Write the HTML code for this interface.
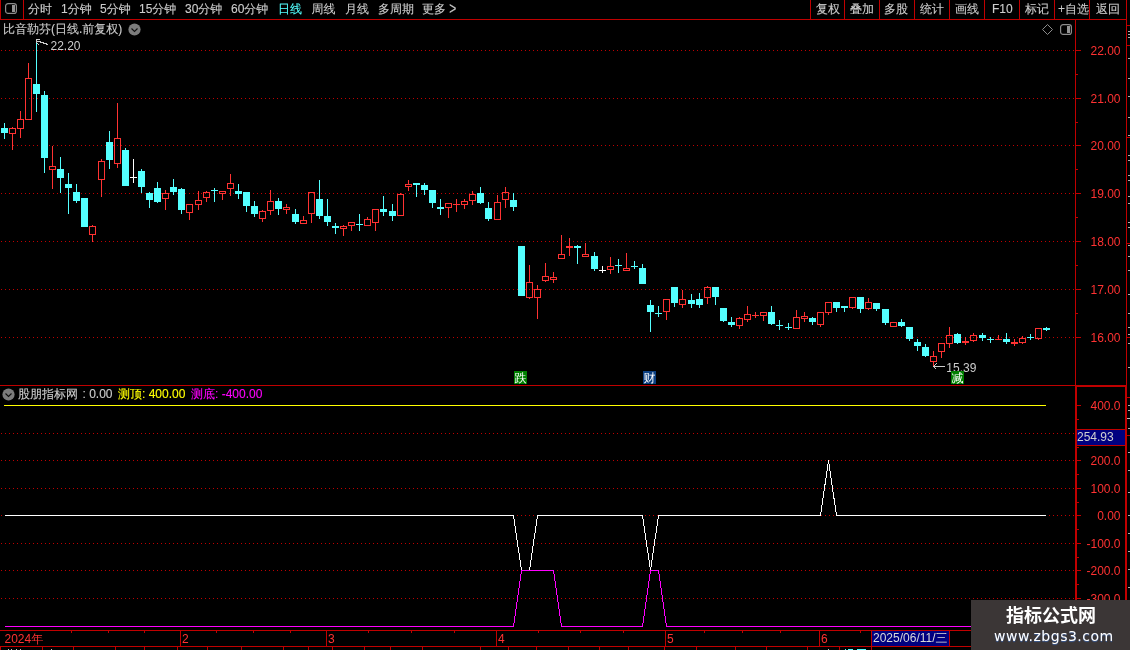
<!DOCTYPE html>
<html lang="zh-CN">
<head>
<meta charset="utf-8">
<title>比音勒芬 日线</title>
<style>
html,body{margin:0;padding:0;background:#000;}
body{width:1130px;height:650px;position:relative;overflow:hidden;font-family:"Liberation Sans","WenQuanYi Zen Hei","Noto Sans CJK SC",sans-serif;font-size:12px;}
#root{position:absolute;left:0;top:0;width:1130px;height:650px;will-change:transform;}
#chart{position:absolute;left:0;top:0;}
#chart text{font-family:"Liberation Sans","WenQuanYi Zen Hei","Noto Sans CJK SC",sans-serif;}
.t{position:absolute;white-space:pre;line-height:14px;height:14px;font-size:12px;-webkit-text-stroke:0.12px currentColor;}
.ic{position:absolute;}
.gt{display:inline-block;transform:scaleY(1.45);transform-origin:50% 62%;}
#wm{position:absolute;left:971px;top:600px;width:159px;height:50px;background:#3b3636;color:#fff;}
#wm b{position:absolute;left:35px;top:5px;white-space:nowrap;font-size:18px;line-height:22px;font-family:"Liberation Sans","Noto Sans CJK SC",sans-serif;font-weight:bold;}
#wm i{position:absolute;left:23px;top:27px;white-space:nowrap;font-style:normal;font-size:14px;letter-spacing:0.5px;line-height:18px;font-family:"DejaVu Sans","Liberation Sans",sans-serif;color:#fff;text-shadow:0 1px 1px rgba(60,120,220,.6);}
</style>
</head>
<body>
<div id="root">
<svg id="chart" width="1130" height="650" viewBox="0 0 1130 650" shape-rendering="crispEdges">
<line x1="1" y1="50.5" x2="1075" y2="50.5" stroke="#c00000" stroke-width="1" stroke-dasharray="1 3"/>
<line x1="1" y1="98.5" x2="1075" y2="98.5" stroke="#c00000" stroke-width="1" stroke-dasharray="1 3"/>
<line x1="1" y1="145.5" x2="1075" y2="145.5" stroke="#c00000" stroke-width="1" stroke-dasharray="1 3"/>
<line x1="1" y1="193.5" x2="1075" y2="193.5" stroke="#c00000" stroke-width="1" stroke-dasharray="1 3"/>
<line x1="1" y1="241.5" x2="1075" y2="241.5" stroke="#c00000" stroke-width="1" stroke-dasharray="1 3"/>
<line x1="1" y1="289.5" x2="1075" y2="289.5" stroke="#c00000" stroke-width="1" stroke-dasharray="1 3"/>
<line x1="1" y1="337.5" x2="1075" y2="337.5" stroke="#c00000" stroke-width="1" stroke-dasharray="1 3"/>
<line x1="1" y1="433.5" x2="1075" y2="433.5" stroke="#c00000" stroke-width="1" stroke-dasharray="1 3"/>
<line x1="1" y1="460.5" x2="1075" y2="460.5" stroke="#c00000" stroke-width="1" stroke-dasharray="1 3"/>
<line x1="1" y1="488.5" x2="1075" y2="488.5" stroke="#c00000" stroke-width="1" stroke-dasharray="1 3"/>
<line x1="1" y1="515.5" x2="1075" y2="515.5" stroke="#c00000" stroke-width="1" stroke-dasharray="1 3"/>
<line x1="1" y1="543.5" x2="1075" y2="543.5" stroke="#c00000" stroke-width="1" stroke-dasharray="1 3"/>
<line x1="1" y1="570.5" x2="1075" y2="570.5" stroke="#c00000" stroke-width="1" stroke-dasharray="1 3"/>
<line x1="1" y1="598.5" x2="1075" y2="598.5" stroke="#c00000" stroke-width="1" stroke-dasharray="1 3"/>
<rect x="4" y="123" width="1" height="16" fill="#54ffff"/>
<rect x="1" y="128" width="7" height="5" fill="#54ffff"/>
<rect x="12" y="127" width="1" height="1" fill="#ff3232"/>
<rect x="12" y="134" width="1" height="16" fill="#ff3232"/>
<rect x="9" y="128" width="7" height="1" fill="#ff3232"/>
<rect x="9" y="133" width="7" height="1" fill="#ff3232"/>
<rect x="9" y="128" width="1" height="6" fill="#ff3232"/>
<rect x="15" y="128" width="1" height="6" fill="#ff3232"/>
<rect x="20" y="111" width="1" height="8" fill="#ff3232"/>
<rect x="20" y="129" width="1" height="9" fill="#ff3232"/>
<rect x="17" y="119" width="7" height="1" fill="#ff3232"/>
<rect x="17" y="128" width="7" height="1" fill="#ff3232"/>
<rect x="17" y="119" width="1" height="10" fill="#ff3232"/>
<rect x="23" y="119" width="1" height="10" fill="#ff3232"/>
<rect x="28" y="63" width="1" height="15" fill="#ff3232"/>
<rect x="25" y="78" width="7" height="1" fill="#ff3232"/>
<rect x="25" y="119" width="7" height="1" fill="#ff3232"/>
<rect x="25" y="78" width="1" height="42" fill="#ff3232"/>
<rect x="31" y="78" width="1" height="42" fill="#ff3232"/>
<rect x="36" y="43" width="1" height="69" fill="#54ffff"/>
<rect x="33" y="84" width="7" height="10" fill="#54ffff"/>
<rect x="44" y="91" width="1" height="82" fill="#54ffff"/>
<rect x="41" y="95" width="7" height="63" fill="#54ffff"/>
<rect x="52" y="146" width="1" height="20" fill="#ff3232"/>
<rect x="52" y="170" width="1" height="19" fill="#ff3232"/>
<rect x="49" y="166" width="7" height="1" fill="#ff3232"/>
<rect x="49" y="169" width="7" height="1" fill="#ff3232"/>
<rect x="49" y="166" width="1" height="4" fill="#ff3232"/>
<rect x="55" y="166" width="1" height="4" fill="#ff3232"/>
<rect x="60" y="157" width="1" height="36" fill="#54ffff"/>
<rect x="57" y="169" width="7" height="9" fill="#54ffff"/>
<rect x="68" y="173" width="1" height="41" fill="#54ffff"/>
<rect x="65" y="184" width="7" height="4" fill="#54ffff"/>
<rect x="76" y="184" width="1" height="19" fill="#54ffff"/>
<rect x="73" y="192" width="7" height="9" fill="#54ffff"/>
<rect x="84" y="198" width="1" height="29" fill="#54ffff"/>
<rect x="81" y="198" width="7" height="29" fill="#54ffff"/>
<rect x="92" y="225" width="1" height="1" fill="#ff3232"/>
<rect x="92" y="235" width="1" height="7" fill="#ff3232"/>
<rect x="89" y="226" width="7" height="1" fill="#ff3232"/>
<rect x="89" y="234" width="7" height="1" fill="#ff3232"/>
<rect x="89" y="226" width="1" height="9" fill="#ff3232"/>
<rect x="95" y="226" width="1" height="9" fill="#ff3232"/>
<rect x="101" y="159" width="1" height="2" fill="#ff3232"/>
<rect x="101" y="180" width="1" height="17" fill="#ff3232"/>
<rect x="98" y="161" width="7" height="1" fill="#ff3232"/>
<rect x="98" y="179" width="7" height="1" fill="#ff3232"/>
<rect x="98" y="161" width="1" height="19" fill="#ff3232"/>
<rect x="104" y="161" width="1" height="19" fill="#ff3232"/>
<rect x="109" y="131" width="1" height="38" fill="#54ffff"/>
<rect x="106" y="142" width="7" height="18" fill="#54ffff"/>
<rect x="117" y="103" width="1" height="35" fill="#ff3232"/>
<rect x="117" y="164" width="1" height="4" fill="#ff3232"/>
<rect x="114" y="138" width="7" height="1" fill="#ff3232"/>
<rect x="114" y="163" width="7" height="1" fill="#ff3232"/>
<rect x="114" y="138" width="1" height="26" fill="#ff3232"/>
<rect x="120" y="138" width="1" height="26" fill="#ff3232"/>
<rect x="125" y="148" width="1" height="38" fill="#54ffff"/>
<rect x="122" y="150" width="7" height="36" fill="#54ffff"/>
<rect x="133" y="159" width="1" height="24" fill="#ffffff"/>
<rect x="130" y="177" width="7" height="1" fill="#ffffff"/>
<rect x="141" y="169" width="1" height="24" fill="#54ffff"/>
<rect x="138" y="171" width="7" height="16" fill="#54ffff"/>
<rect x="149" y="192" width="1" height="16" fill="#54ffff"/>
<rect x="146" y="193" width="7" height="7" fill="#54ffff"/>
<rect x="157" y="182" width="1" height="21" fill="#54ffff"/>
<rect x="154" y="188" width="7" height="14" fill="#54ffff"/>
<rect x="165" y="190" width="1" height="3" fill="#ff3232"/>
<rect x="165" y="199" width="1" height="11" fill="#ff3232"/>
<rect x="162" y="193" width="7" height="1" fill="#ff3232"/>
<rect x="162" y="198" width="7" height="1" fill="#ff3232"/>
<rect x="162" y="193" width="1" height="6" fill="#ff3232"/>
<rect x="168" y="193" width="1" height="6" fill="#ff3232"/>
<rect x="173" y="179" width="1" height="16" fill="#54ffff"/>
<rect x="170" y="187" width="7" height="5" fill="#54ffff"/>
<rect x="181" y="188" width="1" height="26" fill="#54ffff"/>
<rect x="178" y="189" width="7" height="21" fill="#54ffff"/>
<rect x="189" y="213" width="1" height="7" fill="#ff3232"/>
<rect x="186" y="204" width="7" height="1" fill="#ff3232"/>
<rect x="186" y="212" width="7" height="1" fill="#ff3232"/>
<rect x="186" y="204" width="1" height="9" fill="#ff3232"/>
<rect x="192" y="204" width="1" height="9" fill="#ff3232"/>
<rect x="198" y="191" width="1" height="9" fill="#ff3232"/>
<rect x="198" y="205" width="1" height="5" fill="#ff3232"/>
<rect x="195" y="200" width="7" height="1" fill="#ff3232"/>
<rect x="195" y="204" width="7" height="1" fill="#ff3232"/>
<rect x="195" y="200" width="1" height="5" fill="#ff3232"/>
<rect x="201" y="200" width="1" height="5" fill="#ff3232"/>
<rect x="206" y="191" width="1" height="1" fill="#ff3232"/>
<rect x="206" y="198" width="1" height="4" fill="#ff3232"/>
<rect x="203" y="192" width="7" height="1" fill="#ff3232"/>
<rect x="203" y="197" width="7" height="1" fill="#ff3232"/>
<rect x="203" y="192" width="1" height="6" fill="#ff3232"/>
<rect x="209" y="192" width="1" height="6" fill="#ff3232"/>
<rect x="214" y="188" width="1" height="14" fill="#54ffff"/>
<rect x="211" y="190" width="7" height="1" fill="#54ffff"/>
<rect x="222" y="194" width="1" height="6" fill="#ff3232"/>
<rect x="219" y="191" width="7" height="1" fill="#ff3232"/>
<rect x="219" y="193" width="7" height="1" fill="#ff3232"/>
<rect x="219" y="191" width="1" height="3" fill="#ff3232"/>
<rect x="225" y="191" width="1" height="3" fill="#ff3232"/>
<rect x="230" y="174" width="1" height="9" fill="#ff3232"/>
<rect x="230" y="189" width="1" height="7" fill="#ff3232"/>
<rect x="227" y="183" width="7" height="1" fill="#ff3232"/>
<rect x="227" y="188" width="7" height="1" fill="#ff3232"/>
<rect x="227" y="183" width="1" height="6" fill="#ff3232"/>
<rect x="233" y="183" width="1" height="6" fill="#ff3232"/>
<rect x="238" y="184" width="1" height="15" fill="#54ffff"/>
<rect x="235" y="191" width="7" height="3" fill="#54ffff"/>
<rect x="246" y="192" width="1" height="20" fill="#54ffff"/>
<rect x="243" y="192" width="7" height="14" fill="#54ffff"/>
<rect x="254" y="201" width="1" height="16" fill="#54ffff"/>
<rect x="251" y="206" width="7" height="8" fill="#54ffff"/>
<rect x="262" y="210" width="1" height="1" fill="#ff3232"/>
<rect x="262" y="219" width="1" height="3" fill="#ff3232"/>
<rect x="259" y="211" width="7" height="1" fill="#ff3232"/>
<rect x="259" y="218" width="7" height="1" fill="#ff3232"/>
<rect x="259" y="211" width="1" height="8" fill="#ff3232"/>
<rect x="265" y="211" width="1" height="8" fill="#ff3232"/>
<rect x="270" y="190" width="1" height="11" fill="#ff3232"/>
<rect x="270" y="211" width="1" height="4" fill="#ff3232"/>
<rect x="267" y="201" width="7" height="1" fill="#ff3232"/>
<rect x="267" y="210" width="7" height="1" fill="#ff3232"/>
<rect x="267" y="201" width="1" height="10" fill="#ff3232"/>
<rect x="273" y="201" width="1" height="10" fill="#ff3232"/>
<rect x="278" y="198" width="1" height="17" fill="#54ffff"/>
<rect x="275" y="201" width="7" height="8" fill="#54ffff"/>
<rect x="286" y="204" width="1" height="3" fill="#ff3232"/>
<rect x="286" y="210" width="1" height="4" fill="#ff3232"/>
<rect x="283" y="207" width="7" height="1" fill="#ff3232"/>
<rect x="283" y="209" width="7" height="1" fill="#ff3232"/>
<rect x="283" y="207" width="1" height="3" fill="#ff3232"/>
<rect x="289" y="207" width="1" height="3" fill="#ff3232"/>
<rect x="295" y="209" width="1" height="15" fill="#54ffff"/>
<rect x="292" y="214" width="7" height="8" fill="#54ffff"/>
<rect x="303" y="216" width="1" height="4" fill="#ff3232"/>
<rect x="300" y="220" width="7" height="1" fill="#ff3232"/>
<rect x="300" y="223" width="7" height="1" fill="#ff3232"/>
<rect x="300" y="220" width="1" height="4" fill="#ff3232"/>
<rect x="306" y="220" width="1" height="4" fill="#ff3232"/>
<rect x="311" y="214" width="1" height="9" fill="#ff3232"/>
<rect x="308" y="192" width="7" height="1" fill="#ff3232"/>
<rect x="308" y="213" width="7" height="1" fill="#ff3232"/>
<rect x="308" y="192" width="1" height="22" fill="#ff3232"/>
<rect x="314" y="192" width="1" height="22" fill="#ff3232"/>
<rect x="319" y="180" width="1" height="39" fill="#54ffff"/>
<rect x="316" y="199" width="7" height="17" fill="#54ffff"/>
<rect x="327" y="199" width="1" height="27" fill="#54ffff"/>
<rect x="324" y="216" width="7" height="6" fill="#54ffff"/>
<rect x="335" y="223" width="1" height="11" fill="#54ffff"/>
<rect x="332" y="226" width="7" height="2" fill="#54ffff"/>
<rect x="343" y="225" width="1" height="1" fill="#ff3232"/>
<rect x="343" y="229" width="1" height="7" fill="#ff3232"/>
<rect x="340" y="226" width="7" height="1" fill="#ff3232"/>
<rect x="340" y="228" width="7" height="1" fill="#ff3232"/>
<rect x="340" y="226" width="1" height="3" fill="#ff3232"/>
<rect x="346" y="226" width="1" height="3" fill="#ff3232"/>
<rect x="351" y="226" width="1" height="5" fill="#ff3232"/>
<rect x="348" y="222" width="7" height="1" fill="#ff3232"/>
<rect x="348" y="225" width="7" height="1" fill="#ff3232"/>
<rect x="348" y="222" width="1" height="4" fill="#ff3232"/>
<rect x="354" y="222" width="1" height="4" fill="#ff3232"/>
<rect x="359" y="214" width="1" height="17" fill="#54ffff"/>
<rect x="356" y="224" width="7" height="1" fill="#54ffff"/>
<rect x="367" y="217" width="1" height="2" fill="#ff3232"/>
<rect x="364" y="219" width="7" height="1" fill="#ff3232"/>
<rect x="364" y="225" width="7" height="1" fill="#ff3232"/>
<rect x="364" y="219" width="1" height="7" fill="#ff3232"/>
<rect x="370" y="219" width="1" height="7" fill="#ff3232"/>
<rect x="375" y="223" width="1" height="8" fill="#ff3232"/>
<rect x="372" y="209" width="7" height="1" fill="#ff3232"/>
<rect x="372" y="222" width="7" height="1" fill="#ff3232"/>
<rect x="372" y="209" width="1" height="14" fill="#ff3232"/>
<rect x="378" y="209" width="1" height="14" fill="#ff3232"/>
<rect x="383" y="196" width="1" height="20" fill="#54ffff"/>
<rect x="380" y="209" width="7" height="3" fill="#54ffff"/>
<rect x="392" y="204" width="1" height="17" fill="#54ffff"/>
<rect x="389" y="211" width="7" height="5" fill="#54ffff"/>
<rect x="400" y="193" width="1" height="1" fill="#ff3232"/>
<rect x="397" y="194" width="7" height="1" fill="#ff3232"/>
<rect x="397" y="215" width="7" height="1" fill="#ff3232"/>
<rect x="397" y="194" width="1" height="22" fill="#ff3232"/>
<rect x="403" y="194" width="1" height="22" fill="#ff3232"/>
<rect x="408" y="180" width="1" height="4" fill="#ff3232"/>
<rect x="408" y="187" width="1" height="4" fill="#ff3232"/>
<rect x="405" y="184" width="7" height="1" fill="#ff3232"/>
<rect x="405" y="186" width="7" height="1" fill="#ff3232"/>
<rect x="405" y="184" width="1" height="3" fill="#ff3232"/>
<rect x="411" y="184" width="1" height="3" fill="#ff3232"/>
<rect x="416" y="183" width="1" height="14" fill="#54ffff"/>
<rect x="413" y="183" width="7" height="2" fill="#54ffff"/>
<rect x="424" y="183" width="1" height="12" fill="#54ffff"/>
<rect x="421" y="185" width="7" height="5" fill="#54ffff"/>
<rect x="432" y="190" width="1" height="18" fill="#54ffff"/>
<rect x="429" y="190" width="7" height="13" fill="#54ffff"/>
<rect x="440" y="199" width="1" height="16" fill="#54ffff"/>
<rect x="437" y="207" width="7" height="2" fill="#54ffff"/>
<rect x="448" y="208" width="1" height="10" fill="#ff3232"/>
<rect x="445" y="203" width="7" height="1" fill="#ff3232"/>
<rect x="445" y="207" width="7" height="1" fill="#ff3232"/>
<rect x="445" y="203" width="1" height="5" fill="#ff3232"/>
<rect x="451" y="203" width="1" height="5" fill="#ff3232"/>
<rect x="456" y="199" width="1" height="13" fill="#ff3232"/>
<rect x="453" y="204" width="7" height="1" fill="#ff3232"/>
<rect x="464" y="199" width="1" height="2" fill="#ff3232"/>
<rect x="464" y="205" width="1" height="4" fill="#ff3232"/>
<rect x="461" y="201" width="7" height="1" fill="#ff3232"/>
<rect x="461" y="204" width="7" height="1" fill="#ff3232"/>
<rect x="461" y="201" width="1" height="4" fill="#ff3232"/>
<rect x="467" y="201" width="1" height="4" fill="#ff3232"/>
<rect x="472" y="191" width="1" height="3" fill="#ff3232"/>
<rect x="472" y="201" width="1" height="4" fill="#ff3232"/>
<rect x="469" y="194" width="7" height="1" fill="#ff3232"/>
<rect x="469" y="200" width="7" height="1" fill="#ff3232"/>
<rect x="469" y="194" width="1" height="7" fill="#ff3232"/>
<rect x="475" y="194" width="1" height="7" fill="#ff3232"/>
<rect x="480" y="187" width="1" height="17" fill="#54ffff"/>
<rect x="477" y="193" width="7" height="10" fill="#54ffff"/>
<rect x="488" y="202" width="1" height="19" fill="#54ffff"/>
<rect x="485" y="208" width="7" height="11" fill="#54ffff"/>
<rect x="497" y="195" width="1" height="7" fill="#ff3232"/>
<rect x="494" y="202" width="7" height="1" fill="#ff3232"/>
<rect x="494" y="219" width="7" height="1" fill="#ff3232"/>
<rect x="494" y="202" width="1" height="18" fill="#ff3232"/>
<rect x="500" y="202" width="1" height="18" fill="#ff3232"/>
<rect x="505" y="187" width="1" height="5" fill="#ff3232"/>
<rect x="505" y="200" width="1" height="8" fill="#ff3232"/>
<rect x="502" y="192" width="7" height="1" fill="#ff3232"/>
<rect x="502" y="199" width="7" height="1" fill="#ff3232"/>
<rect x="502" y="192" width="1" height="8" fill="#ff3232"/>
<rect x="508" y="192" width="1" height="8" fill="#ff3232"/>
<rect x="513" y="193" width="1" height="18" fill="#54ffff"/>
<rect x="510" y="200" width="7" height="7" fill="#54ffff"/>
<rect x="521" y="246" width="1" height="50" fill="#54ffff"/>
<rect x="518" y="246" width="7" height="50" fill="#54ffff"/>
<rect x="529" y="265" width="1" height="17" fill="#ff3232"/>
<rect x="529" y="298" width="1" height="1" fill="#ff3232"/>
<rect x="526" y="282" width="7" height="1" fill="#ff3232"/>
<rect x="526" y="297" width="7" height="1" fill="#ff3232"/>
<rect x="526" y="282" width="1" height="16" fill="#ff3232"/>
<rect x="532" y="282" width="1" height="16" fill="#ff3232"/>
<rect x="537" y="285" width="1" height="4" fill="#ff3232"/>
<rect x="537" y="298" width="1" height="21" fill="#ff3232"/>
<rect x="534" y="289" width="7" height="1" fill="#ff3232"/>
<rect x="534" y="297" width="7" height="1" fill="#ff3232"/>
<rect x="534" y="289" width="1" height="9" fill="#ff3232"/>
<rect x="540" y="289" width="1" height="9" fill="#ff3232"/>
<rect x="545" y="263" width="1" height="13" fill="#ff3232"/>
<rect x="545" y="281" width="1" height="1" fill="#ff3232"/>
<rect x="542" y="276" width="7" height="1" fill="#ff3232"/>
<rect x="542" y="280" width="7" height="1" fill="#ff3232"/>
<rect x="542" y="276" width="1" height="5" fill="#ff3232"/>
<rect x="548" y="276" width="1" height="5" fill="#ff3232"/>
<rect x="553" y="272" width="1" height="5" fill="#ff3232"/>
<rect x="553" y="280" width="1" height="3" fill="#ff3232"/>
<rect x="550" y="277" width="7" height="1" fill="#ff3232"/>
<rect x="550" y="279" width="7" height="1" fill="#ff3232"/>
<rect x="550" y="277" width="1" height="3" fill="#ff3232"/>
<rect x="556" y="277" width="1" height="3" fill="#ff3232"/>
<rect x="561" y="235" width="1" height="19" fill="#ff3232"/>
<rect x="558" y="254" width="7" height="1" fill="#ff3232"/>
<rect x="558" y="258" width="7" height="1" fill="#ff3232"/>
<rect x="558" y="254" width="1" height="5" fill="#ff3232"/>
<rect x="564" y="254" width="1" height="5" fill="#ff3232"/>
<rect x="569" y="238" width="1" height="18" fill="#ff3232"/>
<rect x="566" y="246" width="7" height="2" fill="#ff3232"/>
<rect x="577" y="245" width="1" height="19" fill="#54ffff"/>
<rect x="574" y="246" width="7" height="2" fill="#54ffff"/>
<rect x="585" y="243" width="1" height="11" fill="#ff3232"/>
<rect x="582" y="254" width="7" height="1" fill="#ff3232"/>
<rect x="582" y="256" width="7" height="1" fill="#ff3232"/>
<rect x="582" y="254" width="1" height="3" fill="#ff3232"/>
<rect x="588" y="254" width="1" height="3" fill="#ff3232"/>
<rect x="594" y="252" width="1" height="19" fill="#54ffff"/>
<rect x="591" y="256" width="7" height="13" fill="#54ffff"/>
<rect x="602" y="266" width="1" height="7" fill="#ffffff"/>
<rect x="599" y="270" width="7" height="1" fill="#ffffff"/>
<rect x="610" y="257" width="1" height="9" fill="#ff3232"/>
<rect x="610" y="270" width="1" height="4" fill="#ff3232"/>
<rect x="607" y="266" width="7" height="1" fill="#ff3232"/>
<rect x="607" y="269" width="7" height="1" fill="#ff3232"/>
<rect x="607" y="266" width="1" height="4" fill="#ff3232"/>
<rect x="613" y="266" width="1" height="4" fill="#ff3232"/>
<rect x="618" y="259" width="1" height="14" fill="#54ffff"/>
<rect x="615" y="265" width="7" height="1" fill="#54ffff"/>
<rect x="626" y="253" width="1" height="15" fill="#ff3232"/>
<rect x="623" y="268" width="7" height="1" fill="#ff3232"/>
<rect x="623" y="270" width="7" height="1" fill="#ff3232"/>
<rect x="623" y="268" width="1" height="3" fill="#ff3232"/>
<rect x="629" y="268" width="1" height="3" fill="#ff3232"/>
<rect x="634" y="261" width="1" height="8" fill="#54ffff"/>
<rect x="631" y="266" width="7" height="1" fill="#54ffff"/>
<rect x="642" y="264" width="1" height="20" fill="#54ffff"/>
<rect x="639" y="268" width="7" height="16" fill="#54ffff"/>
<rect x="650" y="300" width="1" height="32" fill="#54ffff"/>
<rect x="647" y="305" width="7" height="7" fill="#54ffff"/>
<rect x="658" y="306" width="1" height="11" fill="#54ffff"/>
<rect x="655" y="313" width="7" height="1" fill="#54ffff"/>
<rect x="666" y="312" width="1" height="8" fill="#ff3232"/>
<rect x="663" y="299" width="7" height="1" fill="#ff3232"/>
<rect x="663" y="311" width="7" height="1" fill="#ff3232"/>
<rect x="663" y="299" width="1" height="13" fill="#ff3232"/>
<rect x="669" y="299" width="1" height="13" fill="#ff3232"/>
<rect x="674" y="287" width="1" height="20" fill="#54ffff"/>
<rect x="671" y="287" width="7" height="16" fill="#54ffff"/>
<rect x="682" y="290" width="1" height="9" fill="#ff3232"/>
<rect x="682" y="305" width="1" height="3" fill="#ff3232"/>
<rect x="679" y="299" width="7" height="1" fill="#ff3232"/>
<rect x="679" y="304" width="7" height="1" fill="#ff3232"/>
<rect x="679" y="299" width="1" height="6" fill="#ff3232"/>
<rect x="685" y="299" width="1" height="6" fill="#ff3232"/>
<rect x="691" y="294" width="1" height="14" fill="#54ffff"/>
<rect x="688" y="300" width="7" height="4" fill="#54ffff"/>
<rect x="699" y="293" width="1" height="15" fill="#54ffff"/>
<rect x="696" y="299" width="7" height="6" fill="#54ffff"/>
<rect x="707" y="286" width="1" height="1" fill="#ff3232"/>
<rect x="707" y="298" width="1" height="6" fill="#ff3232"/>
<rect x="704" y="287" width="7" height="1" fill="#ff3232"/>
<rect x="704" y="297" width="7" height="1" fill="#ff3232"/>
<rect x="704" y="287" width="1" height="11" fill="#ff3232"/>
<rect x="710" y="287" width="1" height="11" fill="#ff3232"/>
<rect x="715" y="287" width="1" height="18" fill="#54ffff"/>
<rect x="712" y="287" width="7" height="10" fill="#54ffff"/>
<rect x="723" y="308" width="1" height="14" fill="#54ffff"/>
<rect x="720" y="308" width="7" height="13" fill="#54ffff"/>
<rect x="731" y="317" width="1" height="10" fill="#54ffff"/>
<rect x="728" y="322" width="7" height="3" fill="#54ffff"/>
<rect x="739" y="317" width="1" height="1" fill="#ff3232"/>
<rect x="739" y="326" width="1" height="3" fill="#ff3232"/>
<rect x="736" y="318" width="7" height="1" fill="#ff3232"/>
<rect x="736" y="325" width="7" height="1" fill="#ff3232"/>
<rect x="736" y="318" width="1" height="8" fill="#ff3232"/>
<rect x="742" y="318" width="1" height="8" fill="#ff3232"/>
<rect x="747" y="306" width="1" height="8" fill="#ff3232"/>
<rect x="747" y="320" width="1" height="2" fill="#ff3232"/>
<rect x="744" y="314" width="7" height="1" fill="#ff3232"/>
<rect x="744" y="319" width="7" height="1" fill="#ff3232"/>
<rect x="744" y="314" width="1" height="6" fill="#ff3232"/>
<rect x="750" y="314" width="1" height="6" fill="#ff3232"/>
<rect x="755" y="312" width="1" height="6" fill="#ff3232"/>
<rect x="752" y="315" width="7" height="1" fill="#ff3232"/>
<rect x="763" y="316" width="1" height="5" fill="#ff3232"/>
<rect x="760" y="312" width="7" height="1" fill="#ff3232"/>
<rect x="760" y="315" width="7" height="1" fill="#ff3232"/>
<rect x="760" y="312" width="1" height="4" fill="#ff3232"/>
<rect x="766" y="312" width="1" height="4" fill="#ff3232"/>
<rect x="771" y="306" width="1" height="19" fill="#54ffff"/>
<rect x="768" y="312" width="7" height="12" fill="#54ffff"/>
<rect x="779" y="320" width="1" height="10" fill="#54ffff"/>
<rect x="776" y="325" width="7" height="1" fill="#54ffff"/>
<rect x="788" y="323" width="1" height="7" fill="#54ffff"/>
<rect x="785" y="327" width="7" height="1" fill="#54ffff"/>
<rect x="796" y="310" width="1" height="7" fill="#ff3232"/>
<rect x="793" y="317" width="7" height="1" fill="#ff3232"/>
<rect x="793" y="328" width="7" height="1" fill="#ff3232"/>
<rect x="793" y="317" width="1" height="12" fill="#ff3232"/>
<rect x="799" y="317" width="1" height="12" fill="#ff3232"/>
<rect x="804" y="312" width="1" height="4" fill="#ff3232"/>
<rect x="804" y="319" width="1" height="3" fill="#ff3232"/>
<rect x="801" y="316" width="7" height="1" fill="#ff3232"/>
<rect x="801" y="318" width="7" height="1" fill="#ff3232"/>
<rect x="801" y="316" width="1" height="3" fill="#ff3232"/>
<rect x="807" y="316" width="1" height="3" fill="#ff3232"/>
<rect x="812" y="317" width="1" height="8" fill="#54ffff"/>
<rect x="809" y="318" width="7" height="4" fill="#54ffff"/>
<rect x="820" y="325" width="1" height="2" fill="#ff3232"/>
<rect x="817" y="312" width="7" height="1" fill="#ff3232"/>
<rect x="817" y="324" width="7" height="1" fill="#ff3232"/>
<rect x="817" y="312" width="1" height="13" fill="#ff3232"/>
<rect x="823" y="312" width="1" height="13" fill="#ff3232"/>
<rect x="828" y="313" width="1" height="2" fill="#ff3232"/>
<rect x="825" y="302" width="7" height="1" fill="#ff3232"/>
<rect x="825" y="312" width="7" height="1" fill="#ff3232"/>
<rect x="825" y="302" width="1" height="11" fill="#ff3232"/>
<rect x="831" y="302" width="1" height="11" fill="#ff3232"/>
<rect x="836" y="302" width="1" height="10" fill="#54ffff"/>
<rect x="833" y="302" width="7" height="6" fill="#54ffff"/>
<rect x="844" y="306" width="1" height="6" fill="#54ffff"/>
<rect x="841" y="306" width="7" height="2" fill="#54ffff"/>
<rect x="852" y="308" width="1" height="1" fill="#ff3232"/>
<rect x="849" y="297" width="7" height="1" fill="#ff3232"/>
<rect x="849" y="307" width="7" height="1" fill="#ff3232"/>
<rect x="849" y="297" width="1" height="11" fill="#ff3232"/>
<rect x="855" y="297" width="1" height="11" fill="#ff3232"/>
<rect x="860" y="297" width="1" height="16" fill="#54ffff"/>
<rect x="857" y="297" width="7" height="12" fill="#54ffff"/>
<rect x="868" y="298" width="1" height="4" fill="#ff3232"/>
<rect x="868" y="309" width="1" height="1" fill="#ff3232"/>
<rect x="865" y="302" width="7" height="1" fill="#ff3232"/>
<rect x="865" y="308" width="7" height="1" fill="#ff3232"/>
<rect x="865" y="302" width="1" height="7" fill="#ff3232"/>
<rect x="871" y="302" width="1" height="7" fill="#ff3232"/>
<rect x="876" y="303" width="1" height="8" fill="#54ffff"/>
<rect x="873" y="303" width="7" height="6" fill="#54ffff"/>
<rect x="885" y="309" width="1" height="16" fill="#54ffff"/>
<rect x="882" y="309" width="7" height="14" fill="#54ffff"/>
<rect x="890" y="322" width="7" height="1" fill="#ff3232"/>
<rect x="890" y="326" width="7" height="1" fill="#ff3232"/>
<rect x="890" y="322" width="1" height="5" fill="#ff3232"/>
<rect x="896" y="322" width="1" height="5" fill="#ff3232"/>
<rect x="901" y="319" width="1" height="8" fill="#54ffff"/>
<rect x="898" y="322" width="7" height="4" fill="#54ffff"/>
<rect x="909" y="327" width="1" height="14" fill="#54ffff"/>
<rect x="906" y="327" width="7" height="12" fill="#54ffff"/>
<rect x="917" y="339" width="1" height="12" fill="#54ffff"/>
<rect x="914" y="342" width="7" height="4" fill="#54ffff"/>
<rect x="925" y="344" width="1" height="13" fill="#54ffff"/>
<rect x="922" y="347" width="7" height="9" fill="#54ffff"/>
<rect x="933" y="351" width="1" height="5" fill="#ff3232"/>
<rect x="933" y="362" width="1" height="5" fill="#ff3232"/>
<rect x="930" y="356" width="7" height="1" fill="#ff3232"/>
<rect x="930" y="361" width="7" height="1" fill="#ff3232"/>
<rect x="930" y="356" width="1" height="6" fill="#ff3232"/>
<rect x="936" y="356" width="1" height="6" fill="#ff3232"/>
<rect x="941" y="352" width="1" height="6" fill="#ff3232"/>
<rect x="938" y="343" width="7" height="1" fill="#ff3232"/>
<rect x="938" y="351" width="7" height="1" fill="#ff3232"/>
<rect x="938" y="343" width="1" height="9" fill="#ff3232"/>
<rect x="944" y="343" width="1" height="9" fill="#ff3232"/>
<rect x="949" y="327" width="1" height="8" fill="#ff3232"/>
<rect x="949" y="344" width="1" height="4" fill="#ff3232"/>
<rect x="946" y="335" width="7" height="1" fill="#ff3232"/>
<rect x="946" y="343" width="7" height="1" fill="#ff3232"/>
<rect x="946" y="335" width="1" height="9" fill="#ff3232"/>
<rect x="952" y="335" width="1" height="9" fill="#ff3232"/>
<rect x="957" y="333" width="1" height="11" fill="#54ffff"/>
<rect x="954" y="334" width="7" height="9" fill="#54ffff"/>
<rect x="965" y="337" width="1" height="8" fill="#ff3232"/>
<rect x="962" y="341" width="7" height="2" fill="#ff3232"/>
<rect x="973" y="333" width="1" height="2" fill="#ff3232"/>
<rect x="973" y="341" width="1" height="1" fill="#ff3232"/>
<rect x="970" y="335" width="7" height="1" fill="#ff3232"/>
<rect x="970" y="340" width="7" height="1" fill="#ff3232"/>
<rect x="970" y="335" width="1" height="6" fill="#ff3232"/>
<rect x="976" y="335" width="1" height="6" fill="#ff3232"/>
<rect x="982" y="333" width="1" height="8" fill="#54ffff"/>
<rect x="979" y="335" width="7" height="3" fill="#54ffff"/>
<rect x="990" y="337" width="1" height="6" fill="#54ffff"/>
<rect x="987" y="339" width="7" height="1" fill="#54ffff"/>
<rect x="998" y="335" width="1" height="5" fill="#ff3232"/>
<rect x="995" y="339" width="7" height="1" fill="#ff3232"/>
<rect x="1006" y="333" width="1" height="11" fill="#54ffff"/>
<rect x="1003" y="339" width="7" height="3" fill="#54ffff"/>
<rect x="1014" y="339" width="1" height="7" fill="#ff3232"/>
<rect x="1011" y="342" width="7" height="2" fill="#ff3232"/>
<rect x="1022" y="336" width="1" height="2" fill="#ff3232"/>
<rect x="1022" y="343" width="1" height="1" fill="#ff3232"/>
<rect x="1019" y="338" width="7" height="1" fill="#ff3232"/>
<rect x="1019" y="342" width="7" height="1" fill="#ff3232"/>
<rect x="1019" y="338" width="1" height="5" fill="#ff3232"/>
<rect x="1025" y="338" width="1" height="5" fill="#ff3232"/>
<rect x="1030" y="334" width="1" height="6" fill="#54ffff"/>
<rect x="1027" y="337" width="7" height="1" fill="#54ffff"/>
<rect x="1038" y="339" width="1" height="1" fill="#ff3232"/>
<rect x="1035" y="328" width="7" height="1" fill="#ff3232"/>
<rect x="1035" y="338" width="7" height="1" fill="#ff3232"/>
<rect x="1035" y="328" width="1" height="11" fill="#ff3232"/>
<rect x="1041" y="328" width="1" height="11" fill="#ff3232"/>
<rect x="1046" y="327" width="1" height="4" fill="#54ffff"/>
<rect x="1043" y="328" width="7" height="2" fill="#54ffff"/>
<path d="M36.5 43 V39.5 H40 M36.5 41.5 H39 L42 42.5 L45 43.5 L48 44.5 M37.5 43.5 L39 45" fill="none" stroke="#cccccc" stroke-width="1"/>
<text x="50.5" y="50" fill="#cccccc" font-size="12" text-anchor="start">22.20</text>
<path d="M933.5 366.5 H945 M936.5 363.5 L933.5 366.5 L936.5 369.5" fill="none" stroke="#cccccc" stroke-width="1"/>
<text x="946.3" y="372" fill="#cccccc" font-size="12" text-anchor="start">15.39</text>
<rect x="514" y="371" width="13" height="13" fill="#008000"/>
<text x="520.5" y="382" fill="#ffffff" font-size="12" text-anchor="middle">跌</text>
<rect x="643" y="371" width="13" height="13" fill="#0c3f80"/>
<text x="649.5" y="382" fill="#ffffff" font-size="12" text-anchor="middle">财</text>
<rect x="951" y="371" width="13" height="13" fill="#008000"/>
<text x="957.5" y="382" fill="#ffffff" font-size="12" text-anchor="middle">减</text>
<rect x="4" y="405" width="1042" height="1" fill="#ffff00"/>
<polyline points="4.5,515.5 513.5,515.5 521.5,570.5 529.5,570.5 537.5,515.5 642.5,515.5 650.5,570.5 658.5,515.5 820.5,515.5 828.5,460.5 836.5,515.5 1045.5,515.5" fill="none" stroke="#ffffff" stroke-width="1"/>
<polyline points="4.5,626.5 513.5,626.5 521.5,570.5 553.5,570.5 561.5,626.5 642.5,626.5 650.5,570.5 658.5,570.5 666.5,626.5 1045.5,626.5" fill="none" stroke="#ff00ff" stroke-width="1"/>
<rect x="0" y="19" width="1127" height="1" fill="#c00000"/>
<rect x="0" y="0" width="1" height="20" fill="#c00000"/>
<rect x="23" y="0" width="1" height="20" fill="#c00000"/>
<rect x="810" y="0" width="1" height="20" fill="#c00000"/>
<rect x="844" y="0" width="1" height="20" fill="#c00000"/>
<rect x="879" y="0" width="1" height="20" fill="#c00000"/>
<rect x="914" y="0" width="1" height="20" fill="#c00000"/>
<rect x="949" y="0" width="1" height="20" fill="#c00000"/>
<rect x="984" y="0" width="1" height="20" fill="#c00000"/>
<rect x="1019" y="0" width="1" height="20" fill="#c00000"/>
<rect x="1054" y="0" width="1" height="20" fill="#c00000"/>
<rect x="1089" y="0" width="1" height="20" fill="#c00000"/>
<rect x="1126" y="0" width="1" height="650" fill="#c00000"/>
<rect x="1075" y="20" width="1" height="627" fill="#c00000"/>
<rect x="0" y="385" width="1127" height="1" fill="#c00000"/>
<rect x="1076" y="386" width="50" height="1" fill="#c00000"/>
<rect x="1076" y="386" width="1" height="244" fill="#c00000"/>
<rect x="1125" y="386" width="1" height="244" fill="#c00000"/>
<rect x="0" y="630" width="1076" height="1" fill="#c00000"/>
<rect x="0" y="646" width="1127" height="1" fill="#c00000"/>
<rect x="0" y="646" width="1" height="4" fill="#c00000"/>
<rect x="1076" y="50" width="5" height="1" fill="#c00000"/>
<text x="1120.5" y="55" fill="#ff3232" font-size="12" text-anchor="end">22.00</text>
<rect x="1076" y="98" width="5" height="1" fill="#c00000"/>
<text x="1120.5" y="103" fill="#ff3232" font-size="12" text-anchor="end">21.00</text>
<rect x="1076" y="145" width="5" height="1" fill="#c00000"/>
<text x="1120.5" y="150" fill="#ff3232" font-size="12" text-anchor="end">20.00</text>
<rect x="1076" y="193" width="5" height="1" fill="#c00000"/>
<text x="1120.5" y="198" fill="#ff3232" font-size="12" text-anchor="end">19.00</text>
<rect x="1076" y="241" width="5" height="1" fill="#c00000"/>
<text x="1120.5" y="246" fill="#ff3232" font-size="12" text-anchor="end">18.00</text>
<rect x="1076" y="289" width="5" height="1" fill="#c00000"/>
<text x="1120.5" y="294" fill="#ff3232" font-size="12" text-anchor="end">17.00</text>
<rect x="1076" y="337" width="5" height="1" fill="#c00000"/>
<text x="1120.5" y="342" fill="#ff3232" font-size="12" text-anchor="end">16.00</text>
<rect x="1076" y="74" width="2" height="1" fill="#c00000"/>
<rect x="1076" y="122" width="2" height="1" fill="#c00000"/>
<rect x="1076" y="169" width="2" height="1" fill="#c00000"/>
<rect x="1076" y="217" width="2" height="1" fill="#c00000"/>
<rect x="1076" y="265" width="2" height="1" fill="#c00000"/>
<rect x="1076" y="313" width="2" height="1" fill="#c00000"/>
<rect x="1077" y="405" width="4" height="1" fill="#c00000"/>
<text x="1120.5" y="410" fill="#ff3232" font-size="12" text-anchor="end">400.0</text>
<rect x="1077" y="460" width="4" height="1" fill="#c00000"/>
<text x="1120.5" y="465" fill="#ff3232" font-size="12" text-anchor="end">200.0</text>
<rect x="1077" y="488" width="4" height="1" fill="#c00000"/>
<text x="1120.5" y="493" fill="#ff3232" font-size="12" text-anchor="end">100.0</text>
<rect x="1077" y="515" width="4" height="1" fill="#c00000"/>
<text x="1120.5" y="520" fill="#ff3232" font-size="12" text-anchor="end">0.00</text>
<rect x="1077" y="543" width="4" height="1" fill="#c00000"/>
<text x="1120.5" y="548" fill="#ff3232" font-size="12" text-anchor="end">-100.0</text>
<rect x="1077" y="570" width="4" height="1" fill="#c00000"/>
<text x="1120.5" y="575" fill="#ff3232" font-size="12" text-anchor="end">-200.0</text>
<rect x="1077" y="598" width="4" height="1" fill="#c00000"/>
<text x="1120.5" y="603" fill="#ff3232" font-size="12" text-anchor="end">-300.0</text>
<rect x="1077" y="419" width="2" height="1" fill="#c00000"/>
<rect x="1077" y="447" width="2" height="1" fill="#c00000"/>
<rect x="1077" y="474" width="2" height="1" fill="#c00000"/>
<rect x="1077" y="502" width="2" height="1" fill="#c00000"/>
<rect x="1077" y="529" width="2" height="1" fill="#c00000"/>
<rect x="1077" y="557" width="2" height="1" fill="#c00000"/>
<rect x="1077" y="584" width="2" height="1" fill="#c00000"/>
<rect x="1077" y="612" width="2" height="1" fill="#c00000"/>
<rect x="1077" y="429" width="48" height="17" fill="#c00000"/>
<rect x="1077" y="430" width="48" height="15" fill="#000080"/>
<text x="1077" y="441" fill="#d0d0d0" font-size="12" text-anchor="start">254.93</text>
<rect x="71" y="631" width="1" height="2" fill="#c00000"/>
<rect x="108" y="631" width="1" height="2" fill="#c00000"/>
<rect x="144" y="631" width="1" height="2" fill="#c00000"/>
<rect x="216" y="631" width="1" height="2" fill="#c00000"/>
<rect x="253" y="631" width="1" height="2" fill="#c00000"/>
<rect x="290" y="631" width="1" height="2" fill="#c00000"/>
<rect x="368" y="631" width="1" height="2" fill="#c00000"/>
<rect x="411" y="631" width="1" height="2" fill="#c00000"/>
<rect x="454" y="631" width="1" height="2" fill="#c00000"/>
<rect x="538" y="631" width="1" height="2" fill="#c00000"/>
<rect x="580" y="631" width="1" height="2" fill="#c00000"/>
<rect x="623" y="631" width="1" height="2" fill="#c00000"/>
<rect x="704" y="631" width="1" height="2" fill="#c00000"/>
<rect x="742" y="631" width="1" height="2" fill="#c00000"/>
<rect x="780" y="631" width="1" height="2" fill="#c00000"/>
<rect x="860" y="631" width="1" height="2" fill="#c00000"/>
<rect x="180" y="631" width="1" height="15" fill="#c00000"/>
<text x="182" y="643" fill="#ff3232" font-size="12" text-anchor="start">2</text>
<rect x="326" y="631" width="1" height="15" fill="#c00000"/>
<text x="328" y="643" fill="#ff3232" font-size="12" text-anchor="start">3</text>
<rect x="496" y="631" width="1" height="15" fill="#c00000"/>
<text x="498" y="643" fill="#ff3232" font-size="12" text-anchor="start">4</text>
<rect x="665" y="631" width="1" height="15" fill="#c00000"/>
<text x="667" y="643" fill="#ff3232" font-size="12" text-anchor="start">5</text>
<rect x="819" y="631" width="1" height="15" fill="#c00000"/>
<text x="821" y="643" fill="#ff3232" font-size="12" text-anchor="start">6</text>
<text x="4.5" y="643" fill="#ff3232" font-size="12" text-anchor="start">2024年</text>
<rect x="871" y="631" width="1" height="19" fill="#c00000"/>
<rect x="872" y="631" width="77" height="15" fill="#000080"/>
<text x="873" y="642" fill="#d8d8d8" font-size="12" text-anchor="start">2025/06/11/三</text>
<rect x="949" y="631" width="1" height="15" fill="#c00000"/>
<rect x="42" y="647" width="1" height="3" fill="#c00000"/>
<rect x="73" y="647" width="1" height="3" fill="#c00000"/>
<rect x="115" y="647" width="1" height="3" fill="#c00000"/>
<rect x="144" y="647" width="1" height="3" fill="#c00000"/>
<rect x="177" y="647" width="1" height="3" fill="#c00000"/>
<rect x="207" y="647" width="1" height="3" fill="#c00000"/>
<rect x="241" y="647" width="1" height="3" fill="#c00000"/>
<rect x="283" y="647" width="1" height="3" fill="#c00000"/>
<rect x="308" y="647" width="1" height="3" fill="#c00000"/>
<rect x="332" y="647" width="1" height="3" fill="#c00000"/>
<rect x="364" y="647" width="1" height="3" fill="#c00000"/>
<rect x="390" y="647" width="1" height="3" fill="#c00000"/>
<rect x="422" y="647" width="1" height="3" fill="#c00000"/>
<rect x="480" y="647" width="1" height="3" fill="#c00000"/>
<rect x="508" y="647" width="1" height="3" fill="#c00000"/>
<rect x="536" y="647" width="1" height="3" fill="#c00000"/>
<rect x="568" y="647" width="1" height="3" fill="#c00000"/>
<rect x="599" y="647" width="1" height="3" fill="#c00000"/>
<rect x="628" y="647" width="1" height="3" fill="#c00000"/>
<rect x="664" y="647" width="1" height="3" fill="#c00000"/>
<rect x="696" y="647" width="1" height="3" fill="#c00000"/>
<rect x="735" y="647" width="1" height="3" fill="#c00000"/>
<rect x="766" y="647" width="1" height="3" fill="#c00000"/>
<rect x="807" y="647" width="1" height="3" fill="#c00000"/>
<rect x="839" y="647" width="1" height="3" fill="#c00000"/>
<rect x="845" y="649" width="1" height="1" fill="#54ffff"/>
<rect x="848" y="649" width="5" height="1" fill="#54ffff"/>
<rect x="857" y="649" width="9" height="1" fill="#54ffff"/>
<rect x="828" y="649" width="1" height="1" fill="#c0c0c0"/>
<rect x="8" y="649" width="1" height="1" fill="#c0c0c0"/>
<rect x="11" y="649" width="1" height="1" fill="#c0c0c0"/>
<rect x="16" y="649" width="1" height="1" fill="#c0c0c0"/>
<rect x="20" y="649" width="1" height="1" fill="#c0c0c0"/>
<rect x="51" y="649" width="1" height="1" fill="#c0c0c0"/>
<rect x="1127" y="25" width="3" height="1" fill="#c00000"/>
<rect x="1127" y="45" width="3" height="1" fill="#c00000"/>
<rect x="1127" y="137" width="3" height="1" fill="#c00000"/>
<rect x="1127" y="243" width="3" height="1" fill="#c00000"/>
<rect x="1127" y="337" width="3" height="1" fill="#c00000"/>
<rect x="1127" y="397" width="3" height="1" fill="#c00000"/>
<rect x="1127" y="435" width="3" height="1" fill="#c00000"/>
<rect x="1127" y="418" width="3" height="1" fill="#c0c0c0"/>
<rect x="1128" y="31" width="2" height="1" fill="#b0b0b0"/>
<rect x="1128" y="34" width="2" height="1" fill="#b0b0b0"/>
<rect x="1128" y="37" width="2" height="1" fill="#b0b0b0"/>
<rect x="1128" y="58" width="2" height="1" fill="#b0b0b0"/>
<rect x="1128" y="78" width="2" height="1" fill="#b0b0b0"/>
<rect x="1128" y="96" width="2" height="1" fill="#b0b0b0"/>
<rect x="1128" y="117" width="2" height="1" fill="#b0b0b0"/>
<rect x="1128" y="135" width="2" height="1" fill="#b0b0b0"/>
<rect x="1128" y="155" width="2" height="1" fill="#b0b0b0"/>
<rect x="1128" y="160" width="2" height="1" fill="#b0b0b0"/>
<rect x="1128" y="175" width="2" height="1" fill="#b0b0b0"/>
<rect x="1128" y="180" width="2" height="1" fill="#b0b0b0"/>
<rect x="1128" y="196" width="2" height="1" fill="#b0b0b0"/>
<rect x="1128" y="203" width="2" height="1" fill="#b0b0b0"/>
<rect x="1128" y="222" width="2" height="1" fill="#b0b0b0"/>
<rect x="1128" y="227" width="2" height="1" fill="#b0b0b0"/>
<rect x="1128" y="245" width="2" height="1" fill="#b0b0b0"/>
<rect x="1128" y="256" width="2" height="1" fill="#b0b0b0"/>
<rect x="1128" y="270" width="2" height="1" fill="#b0b0b0"/>
<rect x="1128" y="294" width="2" height="1" fill="#b0b0b0"/>
<rect x="1128" y="313" width="2" height="1" fill="#b0b0b0"/>
<rect x="1128" y="327" width="2" height="1" fill="#b0b0b0"/>
<rect x="1128" y="334" width="2" height="1" fill="#b0b0b0"/>
<rect x="1128" y="343" width="2" height="1" fill="#b0b0b0"/>
<rect x="1128" y="367" width="2" height="1" fill="#b0b0b0"/>
<rect x="1128" y="405" width="2" height="1" fill="#b0b0b0"/>
<rect x="1128" y="410" width="2" height="1" fill="#b0b0b0"/>
<rect x="1128" y="428" width="2" height="1" fill="#b0b0b0"/>
<rect x="1128" y="452" width="2" height="1" fill="#b0b0b0"/>
<rect x="1128" y="470" width="2" height="1" fill="#b0b0b0"/>
<rect x="1128" y="492" width="2" height="1" fill="#b0b0b0"/>
<rect x="1128" y="515" width="2" height="1" fill="#b0b0b0"/>
<rect x="1128" y="533" width="2" height="1" fill="#b0b0b0"/>
<rect x="1128" y="551" width="2" height="1" fill="#b0b0b0"/>
<rect x="1128" y="569" width="2" height="1" fill="#b0b0b0"/>
<rect x="1128" y="587" width="2" height="1" fill="#b0b0b0"/>
</svg>
<span class="t" style="left:28px;top:2px;color:#cccccc">分时</span>
<span class="t" style="left:61px;top:2px;color:#cccccc">1分钟</span>
<span class="t" style="left:100px;top:2px;color:#cccccc">5分钟</span>
<span class="t" style="left:139px;top:2px;color:#cccccc">15分钟</span>
<span class="t" style="left:185px;top:2px;color:#cccccc">30分钟</span>
<span class="t" style="left:231px;top:2px;color:#cccccc">60分钟</span>
<span class="t" style="left:278px;top:2px;color:#54ffff">日线</span>
<span class="t" style="left:311.5px;top:2px;color:#cccccc">周线</span>
<span class="t" style="left:345px;top:2px;color:#cccccc">月线</span>
<span class="t" style="left:378px;top:2px;color:#cccccc">多周期</span>
<span class="t" style="left:422px;top:2px;color:#cccccc">更多 <span class="gt">&gt;</span></span>
<span class="t" style="left:816px;top:2px;color:#cccccc">复权</span>
<span class="t" style="left:850px;top:2px;color:#cccccc">叠加</span>
<span class="t" style="left:884px;top:2px;color:#cccccc">多股</span>
<span class="t" style="left:920px;top:2px;color:#cccccc">统计</span>
<span class="t" style="left:955px;top:2px;color:#cccccc">画线</span>
<span class="t" style="left:992px;top:2px;color:#cccccc">F10</span>
<span class="t" style="left:1025px;top:2px;color:#cccccc">标记</span>
<span class="t" style="left:1058px;top:2px;color:#cccccc">+自选</span>
<span class="t" style="left:1096px;top:2px;color:#cccccc">返回</span>
<span class="t" style="left:3px;top:22px;color:#cccccc">比音勒芬(日线.前复权)</span>
<span class="t" style="left:18px;top:387px;color:#cccccc">股朋指标网</span>
<span class="t" style="left:82.5px;top:387px;color:#cccccc">: 0.00</span>
<span class="t" style="left:118px;top:387px;color:#ffff00">测顶: 400.00</span>
<span class="t" style="left:191px;top:387px;color:#ff00ff">测底: -400.00</span>

<svg class="ic" style="left:5px;top:3px" width="13" height="11" viewBox="0 0 13 11"><rect x="0.6" y="0.6" width="10.8" height="9.8" rx="2.5" fill="none" stroke="#8c8c8c" stroke-width="1.2"/><rect x="7" y="2" width="3" height="7" fill="#949494"/></svg>
<svg class="ic" style="left:1060px;top:24px" width="13" height="11" viewBox="0 0 13 11"><rect x="0.6" y="0.6" width="10.8" height="9.8" rx="2.5" fill="none" stroke="#8c8c8c" stroke-width="1.2"/><rect x="7" y="2" width="3" height="7" fill="#949494"/></svg>
<svg class="ic" style="left:1041px;top:23px" width="13" height="13" viewBox="0 0 13 13"><path d="M6.5 1.5 L11.5 6.5 L6.5 11.5 L1.5 6.5 Z" fill="none" stroke="#8c8c8c"/></svg>
<svg class="ic" style="left:127.5px;top:22.5px" width="13" height="13" viewBox="0 0 13 13"><circle cx="6.5" cy="6.5" r="6.1" fill="#7c7c7c"/><path d="M3.5 5.5 L6.5 8.5 L9.5 5.5" fill="none" stroke="#101010" stroke-width="1.1"/></svg>
<svg class="ic" style="left:1.5px;top:388px" width="13" height="13" viewBox="0 0 13 13"><circle cx="6.5" cy="6.5" r="6.1" fill="#7c7c7c"/><path d="M3.5 5.5 L6.5 8.5 L9.5 5.5" fill="none" stroke="#101010" stroke-width="1.1"/></svg>

<div id="wm"><b>指标公式网</b><i>www.zbgs3.com</i></div>
</div>
</body>
</html>
